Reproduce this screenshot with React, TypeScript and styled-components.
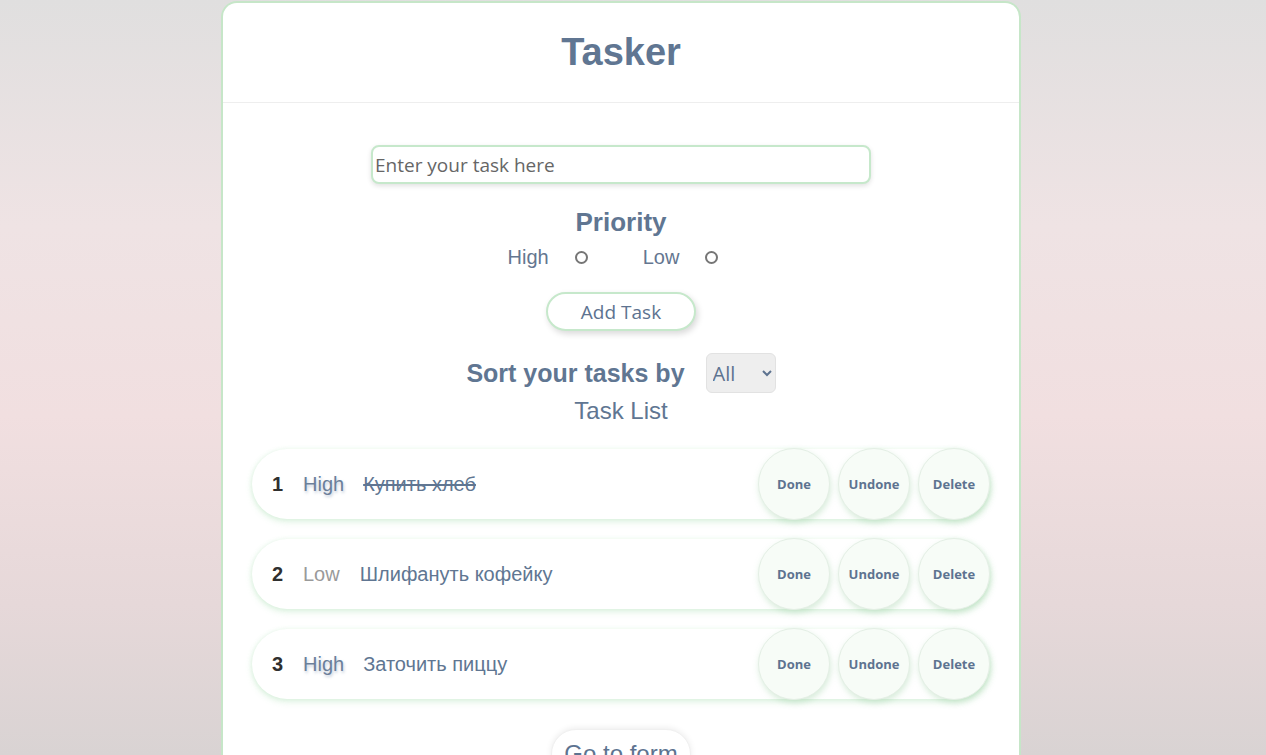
import React, {useState} from 'react';
import styled, {createGlobalStyle} from "styled-components";

const GlobalStyle = createGlobalStyle`
  html, body {
    margin: 0;
    padding: 0;
  }
  body {
    min-height: 100vh;
    background: linear-gradient(180deg, #e0dfdf 0%, #efe3e4 30%, #f1dfe0 55%, #e6d8d9 80%, #d9d3d3 100%);
    background-attachment: fixed;
    font-family: "Liberation Sans", Arial, sans-serif;
  }
`

const Page = styled.div`
  padding: 1px 0 0 calc(50% - 412px);
`
const Card = styled.div`
  width: 796px;
  background: #fff;
  border: 2px solid #c6e6c8;
  border-bottom: none;
  border-radius: 16px 16px 0 0;
  min-height: 800px;
`
const Header = styled.header`
  height: 99px;
  display: flex;
  align-items: center;
  justify-content: center;
  border-bottom: 1px solid #eeeeee;
`
const Title = styled.h1`
  margin: 0;
  font-size: 38px;
  font-weight: bold;
  color: #607692;
`
const Body = styled.div`
  display: flex;
  flex-direction: column;
  align-items: center;
  padding: 42px 28px 40px 28px;
`
const TaskInput = styled.input`
  box-sizing: border-box;
  width: 500px;
  height: 39px;
  padding: 0 2px;
  border: 2px solid #c6e8cb;
  border-radius: 8px;
  box-shadow: 0 2px 5px rgba(0, 0, 0, 0.12);
  font-family: "Open Sans", sans-serif;
  font-size: 19px;
  color: #555;
  outline: none;
  &::placeholder {
    color: #666;
  }
`
const SubTitle = styled.h2`
  margin: 23px 0 0 0;
  font-size: 26px;
  line-height: 30px;
  font-weight: bold;
  color: #607692;
`
const RadioRow = styled.div`
  display: flex;
  align-items: center;
  margin-top: 5px;
  height: 30px;
`
const RadioLabel = styled.label<{ $gap: number }>`
  display: flex;
  align-items: center;
  font-size: 20px;
  color: #647690;
  margin-right: ${p => p.$gap}px;
`
const Radio = styled.input`
  appearance: none;
  width: 13px;
  height: 13px;
  margin: 0 0 0 26px;
  border: 2px solid #767676;
  border-radius: 50%;
  background: #fff;
`
const AddButton = styled.button`
  margin-top: 20px;
  width: 150px;
  height: 39px;
  background: #fff;
  border: 2px solid #c6e8cb;
  border-radius: 20px;
  box-shadow: 2px 3px 6px rgba(0, 0, 0, 0.15);
  font-family: "Open Sans", sans-serif;
  font-size: 19px;
  color: #5d7390;
`
const SortRow = styled.div`
  display: flex;
  align-items: center;
  gap: 21px;
  margin-top: 22px;
`
const SortTitle = styled.span`
  font-size: 25px;
  font-weight: bold;
  color: #607692;
`
const Select = styled.select`
  width: 70px;
  height: 40px;
  padding: 0 2px;
  background: #eeeeee;
  border: 1px solid #e2e2e2;
  border-radius: 6px;
  font-family: "Open Sans", sans-serif;
  font-size: 20px;
  color: #5d7390;
`
const ListTitle = styled.div`
  margin-top: 4px;
  font-size: 24px;
  color: #607692;
`
const List = styled.ul`
  list-style: none;
  margin: 24px 0 0 0;
  padding: 0;
  width: 738px;
  display: flex;
  flex-direction: column;
  gap: 20px;
`
const Row = styled.li`
  display: flex;
  align-items: center;
  height: 70px;
  padding-left: 20px;
  border-radius: 35px;
  background: #fff;
  box-shadow: 0 3px 6px rgba(150, 215, 160, 0.3), -1px 0 4px rgba(150, 215, 160, 0.15);
`
const Num = styled.span`
  font-size: 20px;
  font-weight: bold;
  color: #2f2f2f;
  width: 31px;
`
const Prio = styled.span<{ $high: boolean }>`
  font-size: 20px;
  color: ${p => p.$high ? '#6b7f9a' : '#9a9a9a'};
  text-shadow: ${p => p.$high ? '1px 2px 3px rgba(80, 110, 150, 0.35)' : 'none'};
  margin-right: ${p => p.$high ? 19 : 20}px;
`
const TaskText = styled.span<{ $done: boolean }>`
  flex: 1;
  font-size: 20px;
  color: #607692;
  text-decoration: ${p => p.$done ? 'line-through' : 'none'};
`
const Actions = styled.div`
  display: flex;
  gap: 8px;
`
const RoundButton = styled.button`
  width: 72px;
  height: 72px;
  border-radius: 50%;
  background: #f7fcf7;
  border: 1px solid #e4efe5;
  box-shadow: 1px 3px 6px rgba(140, 200, 150, 0.35);
  font-family: "Open Sans", sans-serif;
  font-weight: bold;
  font-size: 13px;
  color: #5d7390;
  padding: 0;
`
const FormButton = styled.button`
  margin-top: 30px;
  width: 140px;
  height: 50px;
  background: #fff;
  border: 1px solid #f0f0f0;
  border-radius: 25px;
  box-shadow: 0 -1px 6px rgba(0, 0, 0, 0.08);
  font-family: "Liberation Sans", Arial, sans-serif;
  font-size: 24px;
  color: #5d7390;
`

interface task {
    id: number
    priority: 'High' | 'Low'
    text: string
    done: boolean
}

const initialTasks: task[] = [
    {id: 1, priority: 'High', text: 'Купить хлеб', done: true},
    {id: 2, priority: 'Low', text: 'Шлифануть кофейку', done: false},
    {id: 3, priority: 'High', text: 'Заточить пиццу', done: false},
]

const App = () => {
    const [tasks, setTasks] = useState<task[]>(initialTasks)
    const [text, setText] = useState<string>("")

    const setDone = (id: number, done: boolean) => {
        setTasks(tasks.map(t => t.id === id ? {...t, done} : t))
    }
    const remove = (id: number) => {
        setTasks(tasks.filter(t => t.id !== id))
    }

    return (
        <Page>
            <GlobalStyle/>
            <Card>
                <Header>
                    <Title>Tasker</Title>
                </Header>
                <Body>
                    <TaskInput value={text} onChange={e => setText(e.target.value)} placeholder="Enter your task here"/>
                    <SubTitle>Priority</SubTitle>
                    <RadioRow>
                        <RadioLabel $gap={55}>High<Radio type="radio" name="priority"/></RadioLabel>
                        <RadioLabel $gap={16}>Low<Radio type="radio" name="priority"/></RadioLabel>
                    </RadioRow>
                    <AddButton>Add Task</AddButton>
                    <SortRow>
                        <SortTitle>Sort your tasks by</SortTitle>
                        <Select defaultValue="All">
                            <option>All</option>
                            <option>High</option>
                            <option>Low</option>
                        </Select>
                    </SortRow>
                    <ListTitle>Task List</ListTitle>
                    <List>
                        {tasks.map((t, i) => (
                            <Row key={t.id}>
                                <Num>{i + 1}</Num>
                                <Prio $high={t.priority === 'High'}>{t.priority}</Prio>
                                <TaskText $done={t.done}>{t.text}</TaskText>
                                <Actions>
                                    <RoundButton onClick={() => setDone(t.id, true)}>Done</RoundButton>
                                    <RoundButton onClick={() => setDone(t.id, false)}>Undone</RoundButton>
                                    <RoundButton onClick={() => remove(t.id)}>Delete</RoundButton>
                                </Actions>
                            </Row>
                        ))}
                    </List>
                    <FormButton>Go to form</FormButton>
                </Body>
            </Card>
        </Page>
    );
};

export default App;
